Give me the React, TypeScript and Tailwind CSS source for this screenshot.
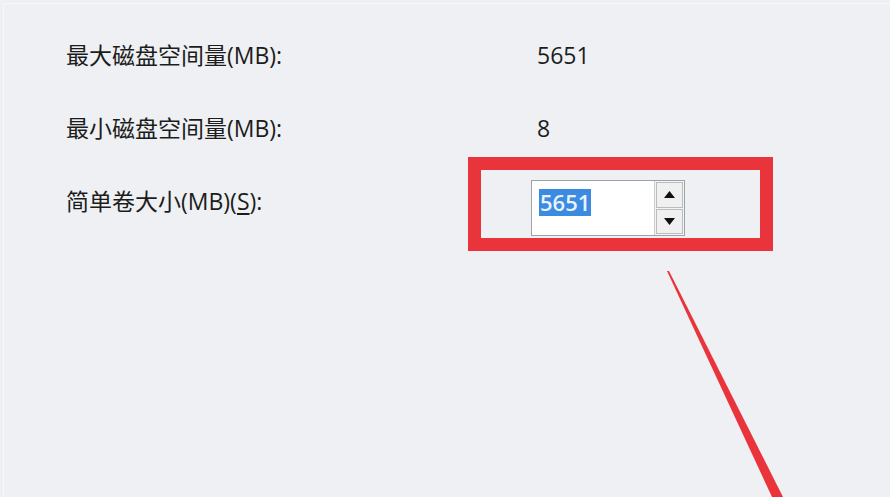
import React from "react";

const font = { fontFamily: '"Open Sans", "Noto Sans CJK SC", sans-serif' };

export default function App() {
  return (
    <div
      className="relative w-[890px] h-[497px] overflow-hidden bg-[#eef0f3] text-[#1c1c1c]"
      style={font}
    >
      <div className="absolute left-[3px] top-[3px] right-0 h-px bg-[#f7f8fa]" />
      <div className="absolute left-[3px] top-[3px] bottom-0 w-px bg-[#f7f8fa]" />
      <div className="flex flex-col pt-[40px] pl-[66px]">
        <div className="flex h-[30px] items-center text-[23px] leading-[30px]">
          <div className="w-[471px]">最大磁盘空间量(MB):</div>
          <div>5651</div>
        </div>
        <div className="mt-[43px] flex h-[30px] items-center text-[23px] leading-[30px]">
          <div className="w-[471px]">最小磁盘空间量(MB):</div>
          <div>8</div>
        </div>
        <div className="mt-[14px] flex items-start">
          <div className="mt-[29px] w-[402px] text-[23px] leading-[30px]">
            简单卷大小(MB)(<span className="underline underline-offset-[3px]">S</span>):
          </div>
          <div className="h-[94px] w-[305px] border-[13px] border-[#e8343a] pl-[50px] pt-[10px]">
            <div className="flex h-[56px] w-[154px] border border-[#9ea3a8] bg-white">
              <div className="flex flex-1 items-start pl-[7px] pt-[8px]">
                <span className="bg-[#3b8be0] px-px text-[22px] leading-[27px] font-semibold text-[#eaf3fc]">
                  5651
                </span>
              </div>
              <div className="flex w-[30px] flex-col gap-px border-l border-[#c9ccd0] bg-[#f4f4f4] p-px">
                <div className="flex flex-1 items-center justify-center border border-[#b9bdc2] bg-[#f0f0f0]">
                  <svg width="11" height="7" viewBox="0 0 11 7">
                    <polygon points="0,7 11,7 5.5,0" fill="#111" />
                  </svg>
                </div>
                <div className="flex flex-1 items-center justify-center border border-[#b9bdc2] bg-[#f0f0f0]">
                  <svg width="11" height="7" viewBox="0 0 11 7">
                    <polygon points="0,0 11,0 5.5,7" fill="#111" />
                  </svg>
                </div>
              </div>
            </div>
          </div>
        </div>
      </div>
      <svg
        className="absolute left-0 top-0"
        width="890"
        height="497"
        viewBox="0 0 890 497"
      >
        <polygon points="667,271 669,271 783,497 772,497" fill="#e8343a" />
      </svg>
    </div>
  );
}
